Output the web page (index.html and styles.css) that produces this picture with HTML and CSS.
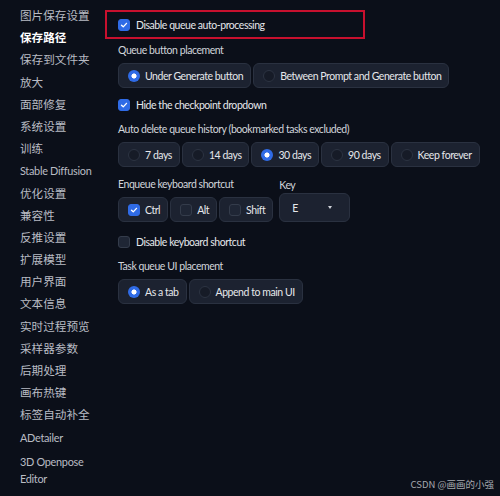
FILE: index.html
```html
<!DOCTYPE html>
<html lang="zh">
<head>
<meta charset="utf-8">
<title>Settings</title>
<link rel="stylesheet" href="styles.css">
</head>
<body>
<div class="page">
  <nav class="sidebar">
    <div class="nav-item">图片保存设置</div>
    <div class="nav-item active">保存路径</div>
    <div class="nav-item">保存到文件夹</div>
    <div class="nav-item">放大</div>
    <div class="nav-item">面部修复</div>
    <div class="nav-item">系统设置</div>
    <div class="nav-item">训练</div>
    <div class="nav-item latin">Stable Diffusion</div>
    <div class="nav-item">优化设置</div>
    <div class="nav-item">兼容性</div>
    <div class="nav-item">反推设置</div>
    <div class="nav-item">扩展模型</div>
    <div class="nav-item">用户界面</div>
    <div class="nav-item">文本信息</div>
    <div class="nav-item">实时过程预览</div>
    <div class="nav-item">采样器参数</div>
    <div class="nav-item">后期处理</div>
    <div class="nav-item">画布热键</div>
    <div class="nav-item">标签自动补全</div>
    <div class="nav-item latin">ADetailer</div>
    <div class="nav-item latin wrap">3D Openpose Editor</div>
  </nav>

  <main class="content">
    <div class="highlight">
      <label class="check-line">
        <span class="cb on"><svg viewBox="0 0 12 12"><path d="M3 6.2 L5.1 8.2 L9 4" fill="none" stroke="#fff" stroke-width="1.6" stroke-linecap="round" stroke-linejoin="round"/></svg></span>
        Disable queue auto-processing
      </label>
    </div>

    <div class="field-label inset mt3">Queue button placement</div>
    <div class="group inset mt5">
      <div class="opt"><span class="radio on"></span>Under Generate button</div>
      <div class="opt"><span class="radio"></span>Between Prompt and Generate button</div>
    </div>

    <label class="check-line mt9 inset">
      <span class="cb on"><svg viewBox="0 0 12 12"><path d="M3 6.2 L5.1 8.2 L9 4" fill="none" stroke="#fff" stroke-width="1.6" stroke-linecap="round" stroke-linejoin="round"/></svg></span>
      Hide the checkpoint dropdown
    </label>

    <div class="field-label inset mt8">Auto delete queue history (bookmarked tasks excluded)</div>
    <div class="group inset mt5">
      <div class="opt"><span class="radio"></span>7 days</div>
      <div class="opt"><span class="radio"></span>14 days</div>
      <div class="opt"><span class="radio on"></span>30 days</div>
      <div class="opt"><span class="radio"></span>90 days</div>
      <div class="opt"><span class="radio"></span>Keep forever</div>
    </div>

    <div class="shortcut-row inset mt9">
      <div class="col">
        <div class="field-label">Enqueue keyboard shortcut</div>
        <div class="group mt5">
          <div class="opt"><span class="cb on"><svg viewBox="0 0 12 12"><path d="M3 6.2 L5.1 8.2 L9 4" fill="none" stroke="#fff" stroke-width="1.6" stroke-linecap="round" stroke-linejoin="round"/></svg></span>Ctrl</div>
          <div class="opt"><span class="cb"></span>Alt</div>
          <div class="opt"><span class="cb"></span>Shift</div>
        </div>
      </div>
      <div class="col key-col">
        <div class="field-label">Key</div>
        <div class="dropdown"><span>E</span><span class="caret"></span></div>
      </div>
    </div>

    <label class="check-line mt12 inset">
      <span class="cb"></span>
      Disable keyboard shortcut
    </label>

    <div class="field-label inset mt8">Task queue UI placement</div>
    <div class="group inset mt5">
      <div class="opt"><span class="radio on"></span>As a tab</div>
      <div class="opt"><span class="radio"></span>Append to main UI</div>
    </div>
  </main>
</div>
<div class="watermark">CSDN @画画的小强</div>
</body>
</html>
```

FILE: styles.css
```css
html, body {
  margin: 0;
  padding: 0;
  background: #0b0f19;
}
body {
  width: 500px;
  height: 496px;
  overflow: hidden;
  position: relative;
  font-family: "Lato", "Noto Sans CJK SC", sans-serif;
  color: #e5e7eb;
}
.page {
  display: flex;
}
.sidebar {
  flex: none;
  width: 85px;
  padding: 5px 0 0 20px;
  font-size: 11.6px;
  color: #b9bcc4;
}
.nav-item {
  line-height: 22.2px;
  height: 22.2px;
  white-space: nowrap;
}
.nav-item.latin {
  font-size: 10.9px;
  letter-spacing: -0.3px;
}
.nav-item.active {
  color: #ffffff;
  font-weight: 700;
}
.nav-item.wrap {
  white-space: normal;
  height: auto;
  line-height: 17px;
  margin-top: 4px;
}
.content {
  flex: 1;
  min-width: 0;
  padding-top: 10px;
  font-family: "Lato", sans-serif;
  font-size: 10.5px;
  letter-spacing: -0.45px;
}
.highlight {
  box-sizing: border-box;
  width: 260px;
  height: 29px;
  border: 2px solid #c8102e;
  display: flex;
  align-items: center;
  padding-left: 11px;
}
.check-line {
  display: flex;
  align-items: center;
  gap: 6px;
  line-height: 16px;
  color: #e5e7eb;
}
.inset {
  margin-left: 13px;
}
.field-label {
  line-height: 16px;
  color: #d1d5db;
}
.mt3 { margin-top: 3px; }
.mt5 { margin-top: 5px; }
.mt8 { margin-top: 8px; }
.mt9 { margin-top: 9px; }
.mt12 { margin-top: 12px; }
.cb {
  box-sizing: border-box;
  width: 12px;
  height: 12px;
  border-radius: 3px;
  background: #1f2635;
  border: 1px solid #343c4b;
  display: inline-flex;
  flex: none;
}
.cb.on {
  background: #2f6be6;
  border-color: #2f6be6;
}
.cb svg {
  width: 100%;
  height: 100%;
}
.group {
  display: flex;
  gap: 2px;
}
.opt {
  box-sizing: border-box;
  height: 25px;
  display: flex;
  align-items: center;
  gap: 5px;
  padding: 0 7px 0 9px;
  background: #1c2230;
  border: 1px solid #2a3140;
  border-radius: 6px;
  color: #e5e7eb;
  white-space: nowrap;
}
.radio {
  box-sizing: border-box;
  width: 12px;
  height: 12px;
  border-radius: 50%;
  background: #161b27;
  border: 1px solid #2c3342;
  flex: none;
}
.radio.on {
  border: none;
  background: radial-gradient(circle, #ffffff 0 2.3px, #2f6be6 2.8px);
}
.shortcut-row {
  display: flex;
  gap: 6px;
}
.key-col {
  align-self: flex-end;
}
.dropdown {
  box-sizing: border-box;
  width: 71px;
  height: 29px;
  display: flex;
  align-items: center;
  justify-content: space-between;
  padding: 0 17px 0 12px;
  background: #1c2230;
  border: 1px solid #2a3140;
  border-radius: 6px;
  color: #e5e7eb;
}
.caret {
  width: 0;
  height: 0;
  border-left: 2.5px solid transparent;
  border-right: 2.5px solid transparent;
  border-top: 3px solid #cfd3da;
}
.watermark {
  position: absolute;
  right: 6px;
  bottom: 5px;
  font-family: "Noto Sans CJK SC", sans-serif;
  font-size: 9.5px;
  color: #a7aab0;
}
```
